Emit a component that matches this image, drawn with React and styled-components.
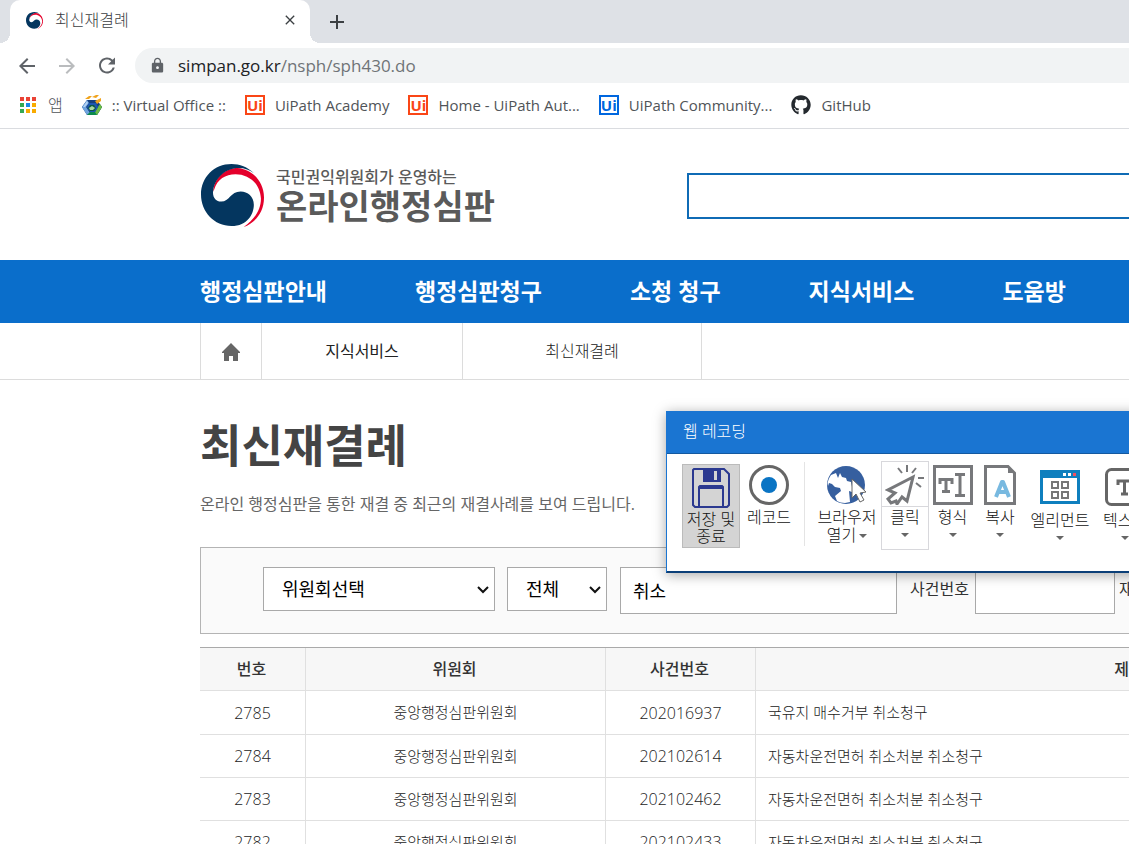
import React from "react";
import styled, { createGlobalStyle } from "styled-components";
import { MdLock, MdRefresh, MdArrowBack, MdArrowForward, MdClose, MdAdd } from "react-icons/md";
import { FaGithub } from "react-icons/fa";

const Global = createGlobalStyle`
  *, *::before, *::after { box-sizing: border-box; }
  body { margin: 0; background: #fff; }
  body, button, input, select { font-family: "Open Sans", "Noto Sans CJK KR", sans-serif; }
  a { color: inherit; text-decoration: none; }
  h1, p, ul { margin: 0; padding: 0; }
  button { border: 0; background: none; padding: 0; }
`;
const Page = styled.div`
  height: 100vh;
  overflow: hidden;
  color: #333;
  position: relative;
`;
const TabStrip = styled.div`
  display: flex;
  height: 43px;
  background: #dee1e6;
`;
const TabFoot = styled.span`
  align-self: flex-end;
  width: 10px;
  height: 10px;
  background: radial-gradient(circle at ${(p) => (p.$side === "left" ? "0 0" : "100% 0")}, #dee1e6 10px, #fff 10px);
`;
const Tab = styled.div`
  display: flex;
  align-items: center;
  width: 300px;
  padding: 0 12px 3px 16px;
  border-radius: 10px 10px 0 0;
  background: #fff;
  color: #3c4043;
  font-size: 16px;
  font-weight: 300;
`;
const TabTitle = styled.span`
  flex: 1;
  padding-left: 12px;
  line-height: 24px;
`;
const IconButton = styled.button`
  display: flex;
  align-items: center;
  justify-content: center;
  width: ${(p) => p.$w || 24}px;
  color: ${(p) => p.$color || "#5f6368"};
`;
const Toolbar = styled.div`
  display: flex;
  align-items: center;
  height: 45px;
  padding-left: 15px;
  gap: 16px;
`;
const AddressBar = styled.div`
  display: flex;
  flex: 1;
  align-items: center;
  gap: 12px;
  height: 35px;
  padding-left: 14px;
  border-radius: 18px 0 0 18px;
  background: #f1f3f4;
  color: #5f6368;
`;
const Address = styled.span`
  font-size: 17px;
  font-weight: 400;
  line-height: 24px;
  color: #6f7377;
  b { font-weight: 400; color: #202124; }
`;
const Bookmarks = styled.nav`
  display: flex;
  align-items: center;
  gap: 19px;
  height: 41px;
  padding: 0 0 6px 19px;
  border-bottom: 1px solid #dadce0;
`;
const Bookmark = styled.a`
  display: flex;
  align-items: center;
  gap: 10px;
  font-size: ${(p) => p.$size || 15}px;
  font-weight: ${(p) => (p.$size ? 300 : 400)};
  line-height: 24px;
  color: #505458;
  white-space: nowrap;
`;
const UiBox = styled.span`
  width: 20px;
  height: 20px;
  border: 2px solid ${(p) => p.$color};
  color: ${(p) => p.$color};
  font: 700 15px/16px "Open Sans", sans-serif;
  text-align: center;
`;
const Header = styled.header`
  display: flex;
  align-items: center;
  height: 131px;
  padding: 2px 0 0 201px;
`;
const Brand = styled.a`
  display: flex;
  align-items: center;
  gap: 12px;
  width: 486px;
  color: #5a5a5a;
`;
const BrandSub = styled.span`
  display: block;
  font-size: 16px;
  font-weight: 500;
  line-height: 20px;
`;
const BrandName = styled.span`
  display: block;
  font-size: 34px;
  font-weight: 700;
  line-height: 38px;
`;
const SiteSearch = styled.input`
  flex: 1;
  height: 46px;
  border: 2px solid #0f6bb5;
  border-right: 0;
  background: #fff;
`;
const MainNav = styled.nav`
  display: flex;
  align-items: center;
  gap: 88px;
  height: 63px;
  padding: 0 0 4px 200px;
  background: #0a6ecb;
  color: #fff;
  font-size: 23px;
  font-weight: 700;
  white-space: nowrap;
`;
const Crumbs = styled.nav`
  display: flex;
  height: 57px;
  padding-left: 200px;
  border-bottom: 1px solid #dcdcdc;
`;
const Crumb = styled.a`
  display: flex;
  align-items: center;
  justify-content: center;
  width: ${(p) => p.$w}px;
  padding-bottom: 2px;
  border-right: 1px solid #dcdcdc;
  font-size: 16px;
  font-weight: ${(p) => p.$weight || 300};
  color: #222;
  &:first-child { padding: 2px 0 0; border-left: 1px solid #dcdcdc; }
`;
const Main = styled.main`
  padding: 34px 0 0 200px;
`;
const Title = styled.h1`
  font-size: 45px;
  line-height: 64px;
  font-weight: 700;
  color: #444;
`;
const Lead = styled.p`
  margin-top: 14px;
  font-size: 16px;
  line-height: 24px;
  font-weight: 400;
  color: #666;
`;
const Filters = styled.form`
  display: flex;
  min-width: 1305px;
  height: 87px;
  margin-top: 31px;
  padding: 19px 0 0 62px;
  border: 1px solid #b4b4b4;
  background: #fafafa;
  font-size: 16px;
`;
const SelectBox = styled.span`
  position: relative;
  display: flex;
  width: ${(p) => p.$w}px;
  height: 44px;
  margin-right: ${(p) => p.$gap}px;
  svg { position: absolute; right: 5px; top: 17px; pointer-events: none; }
`;
const Select = styled.select`
  appearance: none;
  width: 100%;
  padding: 0 18px;
  border: 1px solid #a9a9a9;
  border-radius: 0;
  background: #fff;
  color: #000;
  font-size: 18px;
  font-weight: 400;
`;
const TextBox = styled.input`
  width: ${(p) => p.$w}px;
  height: 47px;
  padding: 0 12px 2px;
  border: 1px solid #a9a9a9;
  background: #fff;
  color: #000;
  font-size: 18px;
`;
const FieldLabel = styled.label`
  margin: 0 6px 0 ${(p) => p.$left}px;
  line-height: 44px;
`;
const Table = styled.table`
  width: 100%;
  min-width: 1305px;
  margin-top: 13px;
  table-layout: fixed;
  border-collapse: separate;
  border-spacing: 0;
  border-top: 1px solid #aaa;
`;
const Th = styled.th`
  width: ${(p) => (p.$w ? p.$w + "px" : "auto")};
  height: 43px;
  padding: 0 2px 2px 0;
  border-bottom: 1px solid #e0e0e0;
  border-right: 1px solid #e0e0e0;
  background: #f7f7f7;
  font-size: 16px;
  font-weight: 500;
`;
const Td = styled.td`
  height: 43px;
  padding: 0 12px ${(p) => (p.$num ? 0 : 2)}px;
  border-bottom: 1px solid #e0e0e0;
  border-right: 1px solid #e0e0e0;
  font-size: ${(p) => (p.$num ? 16 : 15)}px;
  font-weight: 300;
  color: #222;
  text-align: ${(p) => (p.$left ? "left" : "center")};
  tr:first-child > & { height: 44px; }
`;
const Recorder = styled.section`
  position: absolute;
  left: 666px;
  top: 411px;
  width: 560px;
  height: 162px;
  border: 1px solid #1a75d2;
  border-bottom: 2px solid #0b3f78;
  background: #fff;
  box-shadow: 0 2px 12px rgba(0, 0, 0, 0.35);
  color: #111;
`;
const RecorderTitle = styled.div`
  height: 42px;
  padding-left: 16px;
  border-bottom: 1px solid #14599f;
  background: #1a75d2;
  color: #fff;
  font-size: 16px;
  font-weight: 300;
  line-height: 38px;
`;
const Tools = styled.div`
  display: flex;
  align-items: flex-start;
  padding: 7px 0 0 15px;
`;
const Tool = styled.button`
  display: flex;
  flex: none;
  flex-direction: column;
  align-items: center;
  width: ${(p) => p.$w}px;
  height: ${(p) => (p.$active ? 84 : 89)}px;
  margin-top: ${(p) => (p.$active ? 3 : 0)}px;
  padding-top: 2px;
  outline: ${(p) => (p.$active ? "1px solid #bbb" : p.$framed ? "1px solid #d8d8dc" : "0")};
  outline-offset: -1px;
  background: ${(p) => (p.$active ? "#d4d4d4" : "transparent")};
  color: #111;
  font-size: 16px;
  font-weight: 300;
  line-height: 17px;
  white-space: nowrap;
`;
const ToolIcon = styled.span`
  display: flex;
  align-items: center;
  justify-content: center;
  width: 100%;
  height: ${(p) => (p.$tall ? 47 : 44)}px;
  margin-bottom: 1px;
  border-bottom: ${(p) => (p.$ruled ? "1px solid #d8d8dc" : "0")};
`;
const ToolLabel = styled.span`
  line-height: 18px;
`;
const Divider = styled.span`
  width: 1px;
  height: 84px;
  margin: 1px 8px 0 6px;
  background: #e4e4e4;
`;
const Caret = styled.i`
  display: inline-block;
  margin: ${(p) => (p.$inline ? "0 0 3px 3px" : "7px 0 0")};
  border: 4px solid transparent;
  border-top-color: #666;
  border-bottom: 0;
`;

const Taegeuk = ({ size }) => (
  <svg width={size} height={size} viewBox="0 0 62 62" aria-hidden="true">
    <path fill="#e4002b" d="M12 27C13 13 24 4 36 4c14 1 26 13 26 29 0 15-9 25-20 29 10-7 17-16 17-28C58 18 46 10 34 10c-10 0-18 5-21 15z" />
    <path fill="#04365f" d="M52 9C46 3 38 0 30 0 13 0 0 13 0 30s13 31 30 31c16 0 22-12 22-21 0-8-6-13-13-13-10 0-11 10-19 10-6 0-9-5-8-11C14 13 25 4 37 4c6 0 11 2 15 5z" />
  </svg>
);
const Apps = () => (
  <svg width="19" height="18" aria-hidden="true">
    {["#ea4335", "#ea4335", "#ea4335", "#34a853", "#1a87e8", "#f9ab00", "#34a853", "#f9ab00", "#f9ab00"].map((c, i) => (
      <rect key={i} x={1 + (i % 3) * 6} y={1 + Math.floor(i / 3) * 6} width="4" height="4" fill={c} />
    ))}
  </svg>
);
const Office = () => (
  <svg width="20" height="20" viewBox="0 0 20 20" aria-hidden="true">
    <path d="M5 5h10l5 7-5 8H5l-5-8z" fill="#173f7d" />
    <path d="M0 12l5-7 2 3-3 4 4 6-3 2z" fill="#6fa4de" />
    <path d="M1 12l4-6 1 2-3 4z" fill="#b5d3f3" />
    <path d="M5 20l3-3h5l4-7 3 2-5 8z" fill="#0b8a4c" />
    <path d="M13 17l5-8 2 3-5 8z" fill="#6dbb45" />
    <path d="M7 8h7l2 4-3 5H8l-3-5z" fill="#1d56b0" />
    <path d="M8 10h4l2 3-2 3H8l-2-3z" fill="#0b5a43" />
    <path d="M7 13l3-2 3 2-2 2H8z" fill="#a9d8a0" />
    <path d="M3 4l4-3h3L7 4zM10 2l4-2h3l-3 3zM13 6l6-3v3l-4 3z" fill="#f0a31c" />
  </svg>
);
const Home = () => (
  <svg width="20" height="20" viewBox="0 0 20 20" aria-hidden="true">
    <path d="M10 1l9 9v1h-2v8h-5v-5H8v5H3v-8H1v-1z" fill="#666" />
  </svg>
);
const Chevron = () => (
  <svg width="14" height="11" viewBox="0 0 14 11" aria-hidden="true">
    <path d="M2 3l5 5 5-5" fill="none" stroke="#111" strokeWidth="2" />
  </svg>
);
const Floppy = () => (
  <svg width="38" height="42" viewBox="0 0 38 42" fill="none" stroke="#2b3990" strokeWidth="2" aria-hidden="true">
    <path d="M2 2h30l5 5v31l-2 2H3l-2-2V3z" />
    <path d="M11 1h18v14H11z" fill="#2b3990" stroke="none" />
    <path d="M22 4h3v9h-3z" fill="#d4d4d4" stroke="none" />
    <path d="M7 40V20l1-1h22l1 1v20M8 21h22" />
  </svg>
);
const Record = () => (
  <svg width="40" height="40" aria-hidden="true">
    <circle cx="20" cy="20" r="18.5" fill="#fff" stroke="#666" strokeWidth="3" />
    <circle cx="20" cy="20" r="8" fill="#0a74c4" />
  </svg>
);
const Globe = () => (
  <svg width="42" height="40" viewBox="0 0 42 40" aria-hidden="true">
    <circle cx="20" cy="20" r="19" fill="#365f9f" />
    <path fill="#fff" d="M5 10l5-2 2 5 2-5 2 4 4 1 1 3 4 1 1 5v5l-3-1 1 11-5 1c-3 0-6-1-8-2l-2-5 6-5-1-3-5-1-3-3-3-1-1 3c-1-4 1-8 3-11z" />
    <path fill="#fff" stroke="#666" d="M26 14v19l4-4 4 8 4-2-4-7 6-1z" />
  </svg>
);
const Click = () => (
  <svg width="40" height="40" viewBox="0 0 40 40" fill="none" stroke="#77787b" strokeWidth="3" aria-hidden="true">
    <path d="M28 12L3 25l7 3-7 6 3 4 5-2 1 3 5-7 5 4z" />
    <path d="M22 0v7M13 3l4 5M31 3l-4 5M33 13h6M31 18l5 4" strokeWidth="2" />
  </svg>
);
const TypeIcon = () => (
  <svg width="40" height="40" fill="none" stroke="#77787b" strokeWidth="3" aria-hidden="true">
    <path d="M1.500 1.500h37v37h-37z" />
    <path d="M7 19v-4.500h12V19M13 14v13M9 26.500h8M22 9.500h10M22 30.500h10M27 9v22" />
  </svg>
);
const CopyIcon = () => (
  <svg width="32" height="40" fill="none" aria-hidden="true">
    <path d="M1.500 1.500h22.500l6.500 6.500v30.500h-29z" stroke="#77787b" strokeWidth="3" />
    <path d="M24 1l7 7h-7z" fill="#77787b" />
    <path d="M12 32l6-15h1l6 15M14 27h9" stroke="#78b9e0" strokeWidth="4" strokeLinejoin="round" />
  </svg>
);
const ElementIcon = () => (
  <svg width="40" height="34" fill="none" aria-hidden="true">
    <path d="M1.500 1.500h37v31h-37z" stroke="#0f7fbe" strokeWidth="3" />
    <path d="M0 0h40v8H0z" fill="#0f7fbe" />
    <path d="M23 3h3v3h-3zM28 3h3v3h-3z" fill="#fff" />
    <path d="M33 3h3v3h-3z" fill="#f05060" />
    <path d="M12 12h6v6h-6zM22 12h6v6h-6zM12 22h6v6h-6zM22 22h6v6h-6z" stroke="#777" strokeWidth="2" />
  </svg>
);
const TextIcon = () => (
  <svg width="40" height="38" fill="none" stroke="#666" strokeWidth="3" aria-hidden="true">
    <rect x="1.500" y="1.500" width="37" height="35" rx="5" />
    <path d="M13 17v-4h13v4M19.500 12v15M16 26h7" />
  </svg>
);

const rows = [
  ["2785", "202016937", "국유지 매수거부 취소청구"],
  ["2784", "202102614", "자동차운전면허 취소처분 취소청구"],
  ["2783", "202102462", "자동차운전면허 취소처분 취소청구"],
  ["2782", "202102433", "자동차운전면허 취소처분 취소청구"],
];

export default function App() {
  return (
    <Page>
      <Global />
      <TabStrip>
        <TabFoot $side="left" />
        <Tab>
          <Taegeuk size={17} />
          <TabTitle>최신재결례</TabTitle>
          <IconButton $w={16} $color="#3c4043" aria-label="탭 닫기"><MdClose size={18} /></IconButton>
        </Tab>
        <TabFoot $side="right" />
        <IconButton $w={34} $color="#3c4043" aria-label="새 탭"><MdAdd size={24} /></IconButton>
      </TabStrip>
      <Toolbar>
        <IconButton aria-label="뒤로"><MdArrowBack size={24} /></IconButton>
        <IconButton $color="#babcbe" aria-label="앞으로"><MdArrowForward size={24} /></IconButton>
        <IconButton aria-label="새로고침"><MdRefresh size={25} /></IconButton>
        <AddressBar>
          <MdLock size={17} />
          <Address><b>simpan.go.kr</b>/nsph/sph430.do</Address>
        </AddressBar>
      </Toolbar>
      <Bookmarks>
        <Bookmark href="#" $size={16}><Apps />앱</Bookmark>
        <Bookmark href="#"><Office />:: Virtual Office ::</Bookmark>
        <Bookmark href="#"><UiBox $color="#fa4616">Ui</UiBox>UiPath Academy</Bookmark>
        <Bookmark href="#"><UiBox $color="#fa4616">Ui</UiBox>Home - UiPath Aut...</Bookmark>
        <Bookmark href="#"><UiBox $color="#0067df">Ui</UiBox>UiPath Community...</Bookmark>
        <Bookmark href="#"><FaGithub size={20} color="#24292e" />GitHub</Bookmark>
      </Bookmarks>
      <Header>
        <Brand href="#">
          <Taegeuk size={63} />
          <span>
            <BrandSub>국민권익위원회가 운영하는</BrandSub>
            <BrandName>온라인행정심판</BrandName>
          </span>
        </Brand>
        <SiteSearch aria-label="검색" />
      </Header>
      <MainNav>
        <a href="#">행정심판안내</a>
        <a href="#">행정심판청구</a>
        <a href="#">소청 청구</a>
        <a href="#">지식서비스</a>
        <a href="#">도움방</a>
      </MainNav>
      <Crumbs>
        <Crumb href="#" $w={62} aria-label="홈"><Home /></Crumb>
        <Crumb href="#" $w={201} $weight={400}>지식서비스</Crumb>
        <Crumb href="#" $w={239}>최신재결례</Crumb>
      </Crumbs>
      <Main>
        <Title>최신재결례</Title>
        <Lead>온라인 행정심판을 통한 재결 중 최근의 재결사례를 보여 드립니다.</Lead>
        <Filters>
          <SelectBox $w={232} $gap={12}>
            <Select aria-label="위원회선택"><option>위원회선택</option></Select><Chevron />
          </SelectBox>
          <SelectBox $w={100} $gap={13}>
            <Select aria-label="전체"><option>전체</option></Select><Chevron />
          </SelectBox>
          <TextBox $w={277} defaultValue="취소" aria-label="검색어" />
          <FieldLabel $left={13} htmlFor="caseNo">사건번호</FieldLabel>
          <TextBox $w={140} id="caseNo" />
          <FieldLabel $left={4} htmlFor="date">재결일자</FieldLabel>
          <TextBox $w={110} id="date" />
        </Filters>
        <Table>
          <thead>
            <tr><Th $w={106}>번호</Th><Th $w={300}>위원회</Th><Th $w={150}>사건번호</Th><Th>제목</Th></tr>
          </thead>
          <tbody>
            {rows.map(([no, id, title]) => (
              <tr key={no}>
                <Td $num>{no}</Td><Td>중앙행정심판위원회</Td><Td $num>{id}</Td><Td $left>{title}</Td>
              </tr>
            ))}
          </tbody>
        </Table>
      </Main>
      <Recorder>
        <RecorderTitle>웹 레코딩</RecorderTitle>
        <Tools>
          <Tool $w={58} $active><ToolIcon><Floppy /></ToolIcon>저장 및<br />종료</Tool>
          <Tool $w={58}><ToolIcon><Record /></ToolIcon><ToolLabel>레코드</ToolLabel></Tool>
          <Divider />
          <Tool $w={68}><ToolIcon><Globe /></ToolIcon><ToolLabel>브라우저</ToolLabel><ToolLabel>열기<Caret $inline /></ToolLabel></Tool>
          <Tool $w={48} $framed><ToolIcon $ruled><Click /></ToolIcon><ToolLabel>클릭</ToolLabel><Caret /></Tool>
          <Tool $w={47}><ToolIcon><TypeIcon /></ToolIcon><ToolLabel>형식</ToolLabel><Caret /></Tool>
          <Tool $w={48}><ToolIcon><CopyIcon /></ToolIcon><ToolLabel>복사</ToolLabel><Caret /></Tool>
          <Tool $w={72}><ToolIcon $tall><ElementIcon /></ToolIcon><ToolLabel>엘리먼트</ToolLabel><Caret /></Tool>
          <Tool $w={58}><ToolIcon $tall><TextIcon /></ToolIcon><ToolLabel>텍스트</ToolLabel><Caret /></Tool>
        </Tools>
      </Recorder>
    </Page>
  );
}
